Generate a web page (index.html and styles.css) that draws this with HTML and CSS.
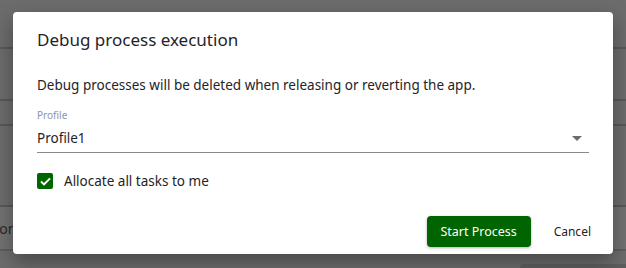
FILE: index.html
```html
<!DOCTYPE html>
<html lang="en">
<head>
    <meta charset="UTF-8">
    <title>Debug process execution</title>
    <link rel="stylesheet" href="styles.css">
</head>
<body>
    <div class="page">
        <div class="row row-head"></div>
        <div class="row row-a"></div>
        <div class="row row-b"></div>
        <div class="row row-c"></div>
        <div class="row-foot">
            <div class="foot-btn">Custom</div>
        </div>
        <div class="page-bottom"><div class="bottom-box"></div></div>
    </div>

    <div class="overlay">
        <div class="dialog">
            <h2 class="dialog-title">Debug process execution</h2>
            <p class="dialog-text">Debug processes will be deleted when releasing or reverting the app.</p>
            <div class="field">
                <label class="field-label">Profile</label>
                <div class="select">
                    <span>Profile1</span>
                    <span class="arrow"></span>
                </div>
            </div>
            <div class="check-row">
                <span class="check">
                    <svg width="11" height="9" viewBox="0 0 11 9"><path d="M1 4.6 L4 7.4 L10 1.4" fill="none" stroke="#fff" stroke-width="2"/></svg>
                </span>
                <span class="check-label">Allocate all tasks to me</span>
            </div>
            <div class="actions">
                <button class="btn-primary">Start Process</button>
                <button class="btn-text">Cancel</button>
            </div>
        </div>
    </div>
</body>
</html>
```

FILE: styles.css
```css
body {
    margin: 0;
    width: 626px;
    height: 268px;
    overflow: hidden;
    font-family: 'Noto Sans', 'DejaVu Sans', sans-serif;
    background-color: #6c6c6c;
    position: relative;
}
.page {
    display: flex;
    flex-direction: column;
}
.row {
    border-bottom: 2px solid #585858;
}
.row-head {
    height: 47px;
}
.row-a {
    height: 50px;
}
.row-b {
    height: 23px;
}
.row-c {
    height: 79px;
}
.row-foot {
    height: 42px;
    background-color: #727272;
    border-bottom: 2px solid #5e5e5e;
    display: flex;
    align-items: center;
}
.foot-btn {
    margin-left: -30px;
    color: #2a2a2a;
    font-size: 14px;
}
.page-bottom {
    display: flex;
    justify-content: flex-end;
    padding-top: 13px;
}
.bottom-box {
    width: 106px;
    height: 10px;
    background-color: #5e5e5e;
    border-radius: 4px 0 0 0;
}
.overlay {
    position: absolute;
    top: 0;
    left: 0;
    right: 0;
    bottom: 0;
    display: flex;
    align-items: flex-start;
    padding: 12px 0 0 13px;
}
.dialog {
    width: 600px;
    height: 242px;
    box-sizing: border-box;
    background: #fff;
    border-radius: 4px;
    padding: 0 24px;
    box-shadow: 0 8px 20px rgba(0, 0, 0, 0.35);
    display: flex;
    flex-direction: column;
    color: #1f2328;
}
.dialog-title {
    margin: 0;
    padding: 16px 0 0;
    font-size: 17px;
    font-weight: 400;
    line-height: 24px;
    height: 24px;
}
.dialog-text {
    margin: 24px 0 0;
    font-size: 13.5px;
    line-height: 18px;
}
.field {
    margin-top: 15px;
    display: flex;
    flex-direction: column;
}
.field-label {
    font-size: 10px;
    color: #8a96a8;
    line-height: 12px;
}
.select {
    display: flex;
    justify-content: space-between;
    align-items: center;
    box-sizing: border-box;
    height: 32px;
    padding-top: 3px;
    border-bottom: 1px solid #8a8a8a;
    font-size: 13.5px;
}
.arrow {
    width: 0;
    height: 0;
    border-left: 5px solid transparent;
    border-right: 5px solid transparent;
    border-top: 5px solid #6c6c6c;
    margin-right: 7px;
}
.check-row {
    display: flex;
    align-items: center;
    margin-top: 19px;
    gap: 11px;
}
.check {
    width: 16px;
    height: 16px;
    background: #006600;
    border-radius: 2px;
    display: flex;
    align-items: center;
    justify-content: center;
}
.check-label {
    font-size: 13.5px;
}
.actions {
    display: flex;
    justify-content: flex-end;
    align-items: center;
    margin: auto -2px 7px 0;
    gap: 23px;
}
.btn-primary {
    background: #006400;
    color: #fff;
    border: none;
    border-radius: 4px;
    height: 31px;
    width: 104px;
    font-family: inherit;
    font-size: 12.5px;
    box-shadow: 0 1px 3px rgba(0, 0, 0, 0.3);
}
.btn-text {
    background: none;
    border: none;
    padding: 0;
    font-family: inherit;
    font-size: 12px;
    color: #1f2328;
}
```
